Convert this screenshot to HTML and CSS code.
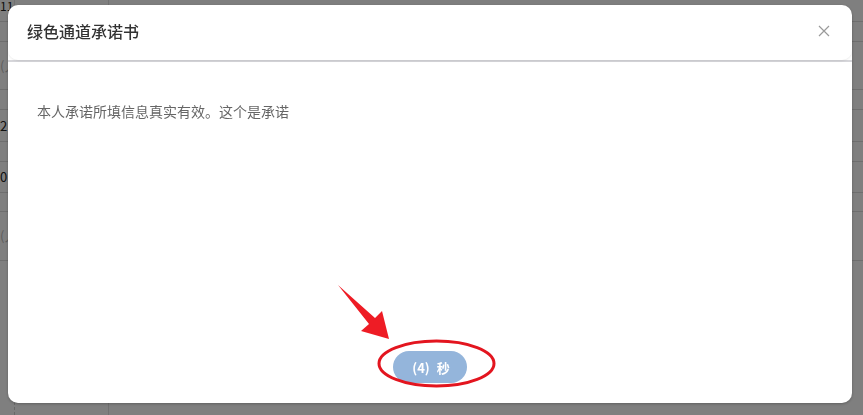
FILE: index.html
```html
<!DOCTYPE html>
<html lang="zh-CN">
<head>
<meta charset="utf-8">
<title>绿色通道承诺书</title>
<link rel="stylesheet" href="styles.css">
</head>
<body>
<div class="page">
  <div class="row r1"><div class="lead">111</div><div class="cell"></div><div class="cell"></div></div>
  <div class="row r2"><div class="lead"></div><div class="cell"></div><div class="cell"></div></div>
  <div class="row r3"><div class="lead muted">(入</div><div class="cell"></div><div class="cell"></div></div>
  <div class="row r4"><div class="lead"></div><div class="cell"></div><div class="cell"></div></div>
  <div class="row r5"><div class="lead">2</div><div class="cell"></div><div class="cell"></div></div>
  <div class="row r4"><div class="lead"></div><div class="cell"></div><div class="cell"></div></div>
  <div class="row r6"><div class="lead">0</div><div class="cell"></div><div class="cell"></div></div>
  <div class="row r7"><div class="lead"></div><div class="cell"></div><div class="cell"></div></div>
  <div class="row r8"><div class="lead muted">(入</div><div class="cell"></div><div class="cell"></div></div>
  <div class="row last"><div class="lead"></div><div class="cell dashed"></div><div class="cell"></div></div>
</div>
<div class="mask"></div>
<div class="dialog">
  <div class="head-wrap">
    <div class="head">
      <span class="title">绿色通道承诺书</span>
      <svg class="close" width="12" height="12" viewBox="0 0 12 12"><path d="M1 1L11 11M11 1L1 11" stroke="#9a9a9a" stroke-width="1.2" fill="none"/></svg>
    </div>
  </div>
  <div class="body">本人承诺所填信息真实有效。这个是承诺</div>
  <div class="foot"><button class="btn">(4) 秒</button></div>
</div>
<svg class="annot" width="863" height="415" viewBox="0 0 863 415">
  <polygon points="338,285 375,318 382,311 389,339 361,331 369,324" fill="#ee1c25"/>
  <ellipse cx="436.5" cy="363.5" rx="57.5" ry="22.5" fill="none" stroke="#e3151f" stroke-width="3"/>
</svg>
</body>
</html>
```
FILE: styles.css
```css
html, body {
  margin: 0;
  padding: 0;
  height: 100%;
  overflow: hidden;
}
body {
  background: #fff;
  font-family: "Noto Sans CJK SC", "Liberation Sans", sans-serif;
}
.page {
  display: flex;
  flex-direction: column;
  height: 415px;
}
.row {
  display: flex;
  border-bottom: 1px solid #dcdcdc;
  box-sizing: border-box;
}
.r1 { height: 22px; }
.r2 { height: 20px; }
.r3 { height: 48px; }
.r4 { height: 20px; }
.r5 { height: 32px; }
.r6 { height: 31px; }
.r7 { height: 19px; }
.r8 { height: 49px; }
.last { flex: 1; border-bottom: none; }
.lead {
  width: 14px;
  font-size: 13px;
  line-height: 16px;
  color: #222;
  text-align: left;
  overflow: hidden;
  white-space: nowrap;
  display: flex;
  align-items: center;
}
.r1 .lead { align-items: flex-start; line-height: 12px; font-size: 12px; }
.muted { color: #bbb; }
.cell {
  flex: 1;
  border-left: 1px solid #e2e2e2;
}
.cell:nth-child(2) { flex: 0 0 93px; }
.dashed { border-left: 1px dashed #d0d0d0; }
.mask {
  position: fixed;
  inset: 0;
  background: rgba(0, 0, 0, 0.5);
}
.dialog {
  position: fixed;
  left: 8px;
  top: 5px;
  width: 844px;
  height: 398px;
  background: #fff;
  border-radius: 10px;
  display: flex;
  flex-direction: column;
  box-shadow: 0 1px 3px rgba(0, 0, 0, 0.25);
}
.head-wrap {
  border-bottom: 2px solid #d6d6da;
}
.head {
  height: 55px;
  border-radius: 10px;
  box-shadow: 0 1px 2px rgba(0, 0, 0, 0.08);
  display: flex;
  align-items: center;
  justify-content: space-between;
  padding: 0 22px 3px 19px;
  box-sizing: border-box;
}
.title {
  font-size: 16px;
  color: #333;
  font-weight: 500;
}
.close { display: block; }
.body {
  padding: 39px 29px 0;
  font-size: 14px;
  line-height: 20px;
  color: #666;
  flex: 1;
}
.foot {
  display: flex;
  justify-content: center;
  padding-bottom: 20px;
}
.btn {
  width: 74px;
  height: 32px;
  border: none;
  border-radius: 16px;
  background: #94b5db;
  color: #fff;
  font-family: "Noto Sans CJK SC", "Liberation Sans", sans-serif;
  font-size: 13px;
  font-weight: bold;
  word-spacing: 4px;
  padding: 0 0 0 2px;
}
.annot {
  position: fixed;
  left: 0;
  top: 0;
  pointer-events: none;
}
```
